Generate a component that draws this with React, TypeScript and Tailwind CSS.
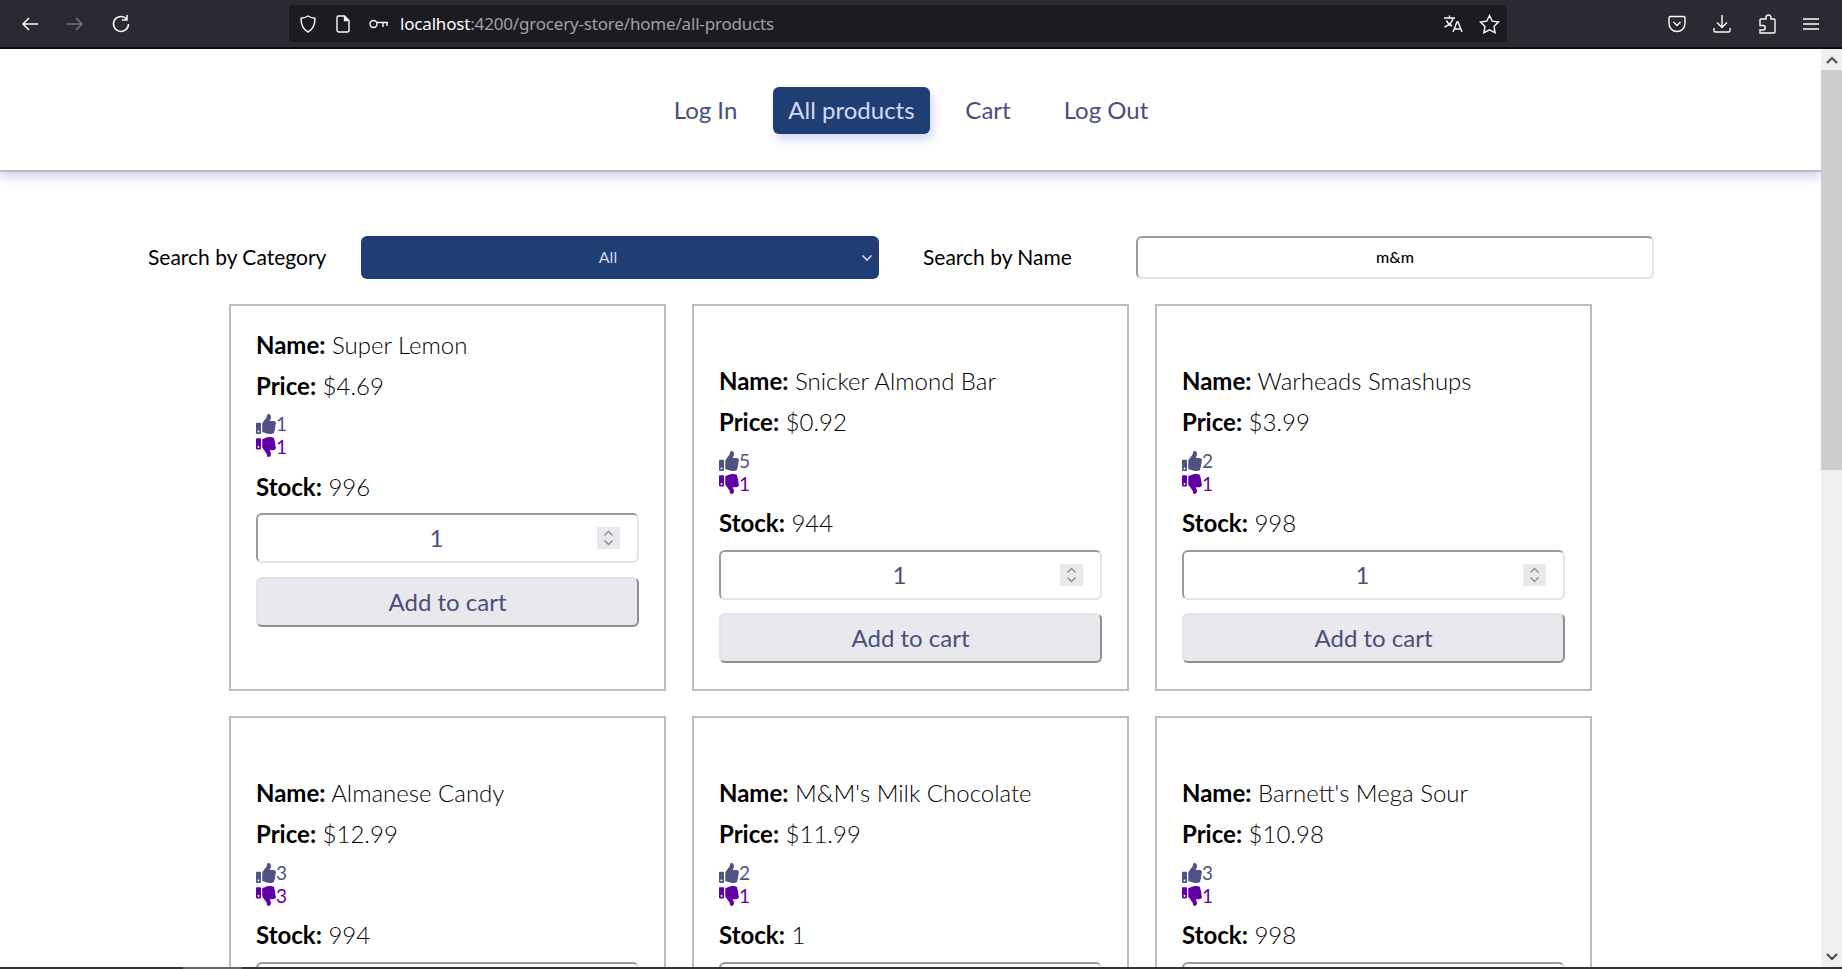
import React from "react";
import { FaThumbsUp, FaThumbsDown } from "react-icons/fa";

function Toolbar() {
  return (
    <div className="flex h-[49px] shrink-0 items-center border-b-2 border-[#0c0c0e] bg-[#2b2a33] text-[#fbfbfe]">
      <div className="flex w-[289px] items-center gap-[27px] pl-[21px]">
        <svg width="18" height="16" viewBox="0 0 18 16" fill="none" stroke="currentColor" strokeWidth="1.5"><path d="M17 8H2M8 2L2 8l6 6" /></svg>
        <svg width="18" height="16" viewBox="0 0 18 16" fill="none" stroke="#77767d" strokeWidth="1.5"><path d="M1 8h15M10 2l6 6-6 6" /></svg>
        <svg width="20" height="20" viewBox="0 0 20 20" fill="none" stroke="currentColor" strokeWidth="1.5"><path d="M15.500 4.800A7.500 7.500 0 1 0 17.500 10" /><path d="M16 1v5h-5" /></svg>
      </div>
      <div className="flex h-[37px] w-[1218px] items-center rounded-[4px] bg-[#1c1b22] pl-[10px] pr-[7px]">
        <svg width="18" height="20" viewBox="0 0 18 20" fill="none" stroke="currentColor" strokeWidth="1.4"><path d="M9 2c2 1.300 4.500 2 7 2.200C16 11 14 15.500 9 18 4 15.500 2 11 2 4.200 4.500 4 7 3.300 9 2z" /></svg>
        <svg className="ml-[19px]" width="14" height="18" viewBox="0 0 14 18" fill="none" stroke="currentColor" strokeWidth="1.4"><path d="M2.500 1h6L13 5.500V15a2 2 0 0 1-2 2H3a2 2 0 0 1-2-2V2.500A1.500 1.500 0 0 1 2.500 1z" /><path d="M8.500 1v4.500H13" fill="currentColor" /></svg>
        <svg className="ml-[19px]" width="20" height="10" viewBox="0 0 20 10" fill="none" stroke="currentColor" strokeWidth="1.4"><circle cx="4.500" cy="5" r="3.500" /><path d="M8 3.500h11M14 3.500V8M18 3.500V7" /></svg>
        <span className="ml-[11px] font-['Noto_Sans'] text-[17px] leading-none tracking-[-0.18px]">localhost<span className="text-[#a0a0a5]">:4200/grocery-store/home/all-products</span></span>
        <div className="ml-auto flex items-center gap-[16px]">
          <svg width="20" height="20" viewBox="0 0 20 20" fill="none" stroke="currentColor" strokeWidth="1.400"><path d="M1 4h11M6.500 1.500V4M10 4c-.8 4-4 7.500-8.500 9M3.500 6.500c1 2.500 3 4.500 5.500 5.500" /><path d="M10 18l4-10h1l4 10M11.500 15h6" /></svg>
          <svg width="21" height="20" viewBox="0 0 21 20" fill="none" stroke="currentColor" strokeWidth="1.400"><path d="M10.500 1.500l2.800 5.700 6.200.9-4.500 4.400 1.100 6.200-5.600-2.900-5.600 2.900 1.100-6.200-4.500-4.400 6.200-.9z" /></svg>
        </div>
      </div>
      <div className="ml-[161px] flex items-center gap-[27px]">
        <svg width="18" height="18" viewBox="0 0 18 18" fill="none" stroke="currentColor" strokeWidth="1.400"><path d="M2.500 1.500h13A1.500 1.500 0 0 1 17 3v5.500a8 8 0 0 1-16 0V3a1.500 1.500 0 0 1 1.500-1.500z" /><path d="M5.500 7L9 10.500 12.500 7" /></svg>
        <svg width="18" height="19" viewBox="0 0 18 19" fill="none" stroke="currentColor" strokeWidth="1.400"><path d="M9 1v12M4 8.500L9 13.500l5-5M1 14v2.500A1.500 1.500 0 0 0 2.500 18h13a1.500 1.500 0 0 0 1.500-1.500V14" /></svg>
        <svg width="18" height="20" viewBox="0 0 18 20" fill="none" stroke="currentColor" strokeWidth="1.400"><path d="M8 5V3.500a2.500 2.500 0 0 1 5 0V5h3a1 1 0 0 1 1 1v12a1 1 0 0 1-1 1H2V16h3a2.200 2.200 0 0 0 0-4.500H2V6a1 1 0 0 1 1-1z" /></svg>
        <svg width="16" height="14" viewBox="0 0 16 14" fill="none" stroke="currentColor" strokeWidth="1.500"><path d="M0 2h16M0 7h16M0 12h16" /></svg>
      </div>
    </div>
  );
}

function Header() {
  return (
    <header className="relative z-10 flex h-[123px] shrink-0 items-center border-b-2 border-[#bdbdbd] bg-white pl-[638px] pt-[1px] text-[24px] text-[#4a4e7d] shadow-[0_5px_10px_0_#ccd3f0]">
      <nav className="flex items-center">
        <a className="w-[135px] text-center">Log In</a>
        <a className="flex h-[47px] w-[157px] items-center justify-center rounded-[6px] bg-[#1f3f74] text-[#d7d7f2] shadow-[3px_6px_10px_0_#d5daf2]">All products</a>
        <a className="ml-[22px] w-[72px] text-center">Cart</a>
        <a className="ml-[26px] w-[112px] text-center">Log Out</a>
      </nav>
    </header>
  );
}

function Search() {
  return (
    <div className="flex h-[43px] items-center text-[21px] text-black">
      <label className="ml-[148px] w-[213px] pb-[2px]">Search by Category</label>
      <div className="relative flex h-[43px] w-[518px] items-center justify-center rounded-[6px] bg-[#1f3f74] pb-[2px] pr-[24px] text-[16px] text-[#d7d7f2]">
        All
        <svg className="absolute right-[6px] top-[18px]" width="12" height="8" viewBox="0 0 12 8" fill="none" stroke="#d7d7f2" strokeWidth="1.600"><path d="M1.500 1.500L6 6l4.500-4.500" /></svg>
      </div>
      <label className="ml-[44px] w-[213px] pb-[2px]">Search by Name</label>
      <input readOnly value="m&m" className="h-[43px] w-[518px] rounded-[6px] border-2 border-b-[#e3e3e3] border-l-[#9a9a9a] border-r-[#e3e3e3] border-t-[#9a9a9a] bg-white pb-[2px] text-center text-[16px] font-medium text-black" />
    </div>
  );
}

type P = { name: string; price: string; up: number; down: number; stock: number };

function Card({ p, first }: { p: P; first?: boolean }) {
  return (
    <div className={first ? "h-[387px] border-2 border-[#bdbdbd] pl-[25px] pt-[22px]" : "h-[387px] border-2 border-[#bdbdbd] pl-[25px] pt-[58px]"}>
      <div className="text-[24px] font-light leading-[34px] text-black"><b className="font-bold">Name:</b> {p.name}</div>
      <div className="mt-[7px] text-[24px] font-light leading-[34px] text-black"><b className="font-bold">Price:</b> {p.price}</div>
      <div className={first ? "mt-[9px] flex h-[23px] items-center text-[19px] leading-none text-[#4f5283]" : "mt-[10px] flex h-[23px] items-center text-[19px] leading-none text-[#4f5283]"}><FaThumbsUp className="h-[20px] w-[20px]" />{p.up}</div>
      <div className="flex h-[23px] items-center text-[19px] leading-none text-[#6200a8]"><FaThumbsDown className="h-[20px] w-[20px]" />{p.down}</div>
      <div className={first ? "mt-[12px] text-[24px] font-light leading-[34px] text-black" : "mt-[11px] text-[24px] font-light leading-[34px] text-black"}><b className="font-bold">Stock:</b> {p.stock}</div>
      <div className={first ? "mt-[9px] flex h-[50px] w-[383px] items-center rounded-[6px] border-2 border-b-[#e3e3e3] border-l-[#9a9a9a] border-r-[#e3e3e3] border-t-[#9a9a9a] bg-white pr-[17px] text-[24px] text-[#4a4e7d]" : "mt-[10px] flex h-[50px] w-[383px] items-center rounded-[6px] border-2 border-b-[#e3e3e3] border-l-[#9a9a9a] border-r-[#e3e3e3] border-t-[#9a9a9a] bg-white pr-[17px] text-[24px] text-[#4a4e7d]"}>
        <span className="flex-1 pl-[18px] text-center">1</span>
        <span className="flex h-[22px] w-[23px] items-center justify-center bg-[#e9e9ed]">
          <svg width="11" height="16" viewBox="0 0 11 16" fill="none" stroke="#8a8a8a" strokeWidth="1.300"><path d="M1.500 5.500l4-4 4 4M1.500 10.500l4 4 4-4" /></svg>
        </span>
      </div>
      <button className={first ? "mt-[14px] h-[50px] w-[383px] rounded-[6px] border-2 border-b-[#8f8f8f] border-l-[#e3e3e8] border-r-[#8f8f8f] border-t-[#e3e3e8] bg-[#e9e9ed] text-[24px] text-[#4a4e7d]" : "mt-[13px] h-[50px] w-[383px] rounded-[6px] border-2 border-b-[#8f8f8f] border-l-[#e3e3e8] border-r-[#8f8f8f] border-t-[#e3e3e8] bg-[#e9e9ed] text-[24px] text-[#4a4e7d]"}>Add to cart</button>
    </div>
  );
}

const products: P[] = [
  { name: "Super Lemon", price: "$4.69", up: 1, down: 1, stock: 996 },
  { name: "Snicker Almond Bar", price: "$0.92", up: 5, down: 1, stock: 944 },
  { name: "Warheads Smashups", price: "$3.99", up: 2, down: 1, stock: 998 },
  { name: "Almanese Candy", price: "$12.99", up: 3, down: 3, stock: 994 },
  { name: "M&M's Milk Chocolate", price: "$11.99", up: 2, down: 1, stock: 1 },
  { name: "Barnett's Mega Sour", price: "$10.98", up: 3, down: 1, stock: 998 },
];

function Scrollbar() {
  return (
    <div className="flex h-full w-[21px] shrink-0 flex-col bg-[#f0f0f0]">
      <div className="flex h-[21px] shrink-0 items-center justify-center">
        <svg width="12" height="8" viewBox="0 0 12 8" fill="none" stroke="#505050" strokeWidth="2.200"><path d="M1 7l5-5 5 5" /></svg>
      </div>
      <div className="h-[400px] shrink-0 bg-[#cdcdcd]" />
      <div className="flex-1" />
      <div className="flex h-[21px] shrink-0 items-center justify-center">
        <svg width="12" height="8" viewBox="0 0 12 8" fill="none" stroke="#505050" strokeWidth="2.200"><path d="M1 1l5 5 5-5" /></svg>
      </div>
    </div>
  );
}

export default function App() {
  return (
    <div className="flex h-[969px] w-[1842px] flex-col overflow-hidden bg-white font-['Lato',sans-serif]">
      <Toolbar />
      <div className="flex min-h-0 flex-1">
        <div className="min-w-0 flex-1 overflow-hidden">
          <Header />
          <div className="mt-[64px]"><Search /></div>
          <div className="ml-[229px] mt-[25px] grid grid-cols-[437px_437px_437px] gap-x-[26px] gap-y-[25px]">
            {products.map((p, i) => <Card key={p.name} p={p} first={i === 0} />)}
          </div>
        </div>
        <Scrollbar />
      </div>
      <div className="flex h-[2px] shrink-0 bg-[#333]">
        <div className="ml-[183px] w-[59px] bg-[#666]" />
      </div>
    </div>
  );
}
